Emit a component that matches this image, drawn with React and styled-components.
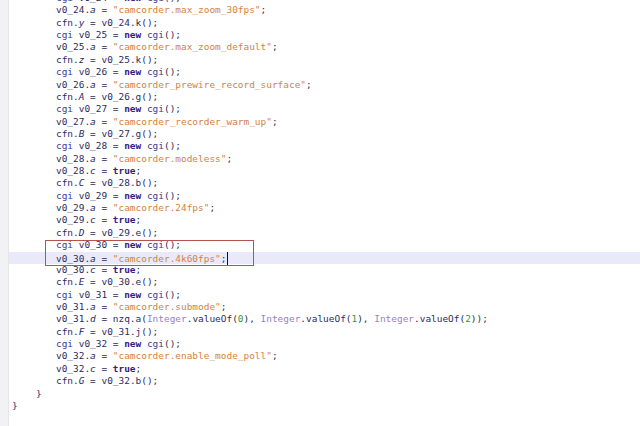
import React from "react";
import styled, { createGlobalStyle } from "styled-components";

const Global = createGlobalStyle`
  html, body {
    margin: 0;
    padding: 0;
    background: #ffffff;
    overflow: hidden;
  }
`;

// token helpers
const t = (text) => ["txt", text];
const kw = (text) => ["kw", text];
const cls = (text) => ["cls", text];
const str = (text) => ["str", text];
const fld = (text) => ["fld", text];
const typ = (text) => ["typ", text];
const num = (text) => ["num", text];

const newCgi = (n) => [cls("cgi"), t(` v0_${n} = `), kw("new"), t(" "), cls("cgi"), t("();")];
const setA = (n, s) => [t(`v0_${n}.`), fld("a"), t(" = "), str(`"${s}"`), t(";")];
const setC = (n) => [t(`v0_${n}.`), fld("c"), t(" = "), kw("true"), t(";")];
const cfn = (f, n, m) => [t("cfn."), fld(f), t(` = v0_${n}.${m}();`)];

const lines = [
  { level: 2, tokens: newCgi(24) },
  { level: 2, tokens: setA(24, "camcorder.max_zoom_30fps") },
  { level: 2, tokens: cfn("y", 24, "k") },
  { level: 2, tokens: newCgi(25) },
  { level: 2, tokens: setA(25, "camcorder.max_zoom_default") },
  { level: 2, tokens: cfn("z", 25, "k") },
  { level: 2, tokens: newCgi(26) },
  { level: 2, tokens: setA(26, "camcorder_prewire_record_surface") },
  { level: 2, tokens: cfn("A", 26, "g") },
  { level: 2, tokens: newCgi(27) },
  { level: 2, tokens: setA(27, "camcorder_recorder_warm_up") },
  { level: 2, tokens: cfn("B", 27, "g") },
  { level: 2, tokens: newCgi(28) },
  { level: 2, tokens: setA(28, "camcorder.modeless") },
  { level: 2, tokens: setC(28) },
  { level: 2, tokens: cfn("C", 28, "b") },
  { level: 2, tokens: newCgi(29) },
  { level: 2, tokens: setA(29, "camcorder.24fps") },
  { level: 2, tokens: setC(29) },
  { level: 2, tokens: cfn("D", 29, "e") },
  { level: 2, tokens: newCgi(30) },
  { level: 2, tokens: setA(30, "camcorder.4k60fps"), current: true },
  { level: 2, tokens: setC(30) },
  { level: 2, tokens: cfn("E", 30, "e") },
  { level: 2, tokens: newCgi(31) },
  { level: 2, tokens: setA(31, "camcorder.submode") },
  {
    level: 2,
    tokens: [
      t("v0_31."),
      fld("d"),
      t(" = nzq.a("),
      typ("Integer"),
      t(".valueOf("),
      num("0"),
      t("), "),
      typ("Integer"),
      t(".valueOf("),
      num("1"),
      t("), "),
      typ("Integer"),
      t(".valueOf("),
      num("2"),
      t("));"),
    ],
  },
  { level: 2, tokens: cfn("F", 31, "j") },
  { level: 2, tokens: newCgi(32) },
  { level: 2, tokens: setA(32, "camcorder.enable_mode_poll") },
  { level: 2, tokens: setC(32) },
  { level: 2, tokens: cfn("G", 32, "b") },
  { level: 1, tokens: [t("}")] },
  { level: 0, tokens: [t("}")] },
];

const indent = [3, 27, 47];

const colors = {
  txt: "#2c2c5c",
  kw: "#33207e",
  cls: "#3a3a92",
  str: "#d6823c",
  fld: "#2c2c5c",
  typ: "#9a80c4",
  num: "#3f8f3f",
};

const Editor = styled.div`
  display: flex;
  width: 640px;
  height: 426px;
  overflow: hidden;
  background: #ffffff;
`;

const Gutter = styled.div`
  width: 8px;
  flex-shrink: 0;
  background: #f2f2f4;
  border-right: 1px solid #e6e6ea;
`;

const Code = styled.div`
  flex: 1;
  margin-top: -8px;
  font-family: "DejaVu Sans Mono", "Liberation Mono", monospace;
  font-size: 9.45px;
  color: #2c2c5c;
`;

const Line = styled.div`
  height: 12.36px;
  line-height: 12.36px;
  white-space: pre;
  padding-left: ${(p) => p.$indent}px;
  background: ${(p) => (p.$current ? "#e9e9fa" : "transparent")};
`;

// red selection frame around the two marked lines
const Marked = styled.div`
  position: relative;
  &::after {
    content: "";
    position: absolute;
    left: 36px;
    top: 0.8px;
    width: 207px;
    height: 24px;
    border: 1px solid #b8524c;
    pointer-events: none;
  }
`;

const Tok = styled.span`
  color: ${(p) => colors[p.$kind]};
  font-weight: ${(p) => (p.$kind === "kw" ? "bold" : "normal")};
  font-style: ${(p) => (p.$kind === "fld" ? "italic" : "normal")};
`;

const Caret = styled.span`
  display: inline-block;
  width: 1px;
  height: 13px;
  margin-left: 1px;
  vertical-align: -3px;
  background: #111111;
`;

const CodeLine = ({ line }) => (
  <Line $indent={indent[line.level]} $current={line.current}>
    {line.tokens.map(([kind, text], i) => (
      <Tok key={i} $kind={kind}>
        {text}
      </Tok>
    ))}
    {line.current && <Caret />}
  </Line>
);

export default function App() {
  const before = lines.slice(0, 20);
  const marked = lines.slice(20, 22);
  const after = lines.slice(22);
  return (
    <>
      <Global />
      <Editor>
        <Gutter />
        <Code>
          {before.map((l, i) => (
            <CodeLine key={i} line={l} />
          ))}
          <Marked>
            {marked.map((l, i) => (
              <CodeLine key={i} line={l} />
            ))}
          </Marked>
          {after.map((l, i) => (
            <CodeLine key={i} line={l} />
          ))}
        </Code>
      </Editor>
    </>
  );
}
